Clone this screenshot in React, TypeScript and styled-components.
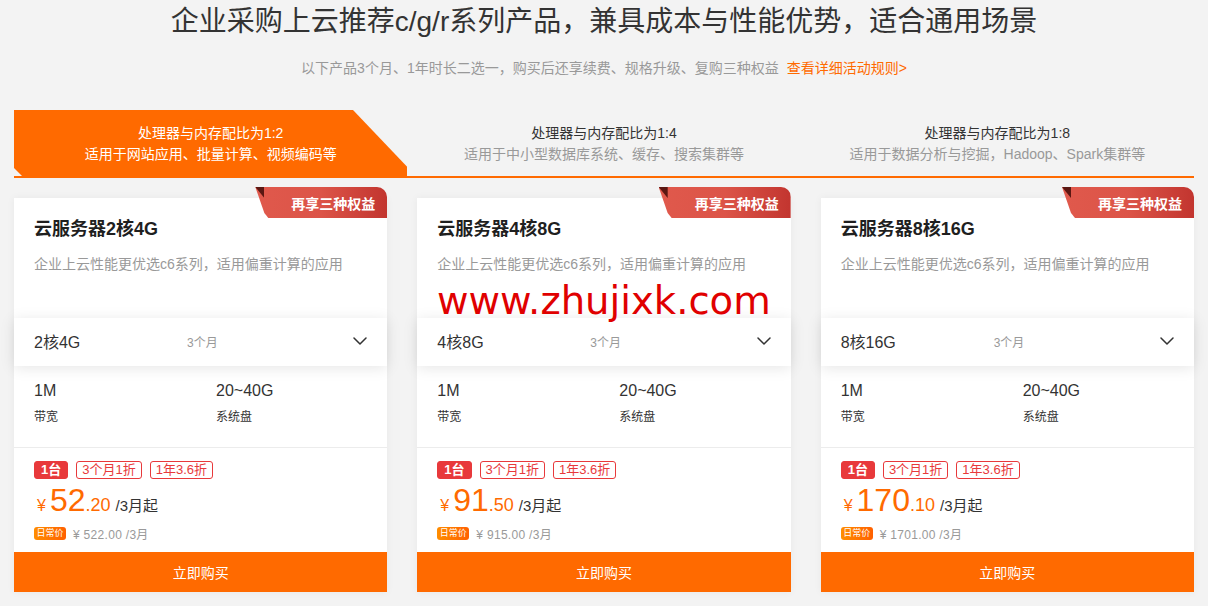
import React from 'react';
import styled, { createGlobalStyle } from 'styled-components';

const GlobalStyle = createGlobalStyle`
  * { box-sizing: border-box; }
  html, body { margin: 0; padding: 0; background: #f3f3f3; }
  body {
    font-family: "Liberation Sans", Arial, "Noto Sans CJK SC", sans-serif;
    color: #333;
  }
`;

const Page = styled.div`
  position: relative;
  width: 1180px;
  margin: 0 auto;
  padding-bottom: 14px;
`;

const Title = styled.h1`
  margin: 0;
  font-size: 28px;
  font-weight: 400;
  line-height: 44px;
  text-align: center;
  color: #333;
`;

const Subtitle = styled.p`
  margin: 14px 0 0;
  font-size: 14px;
  line-height: 20px;
  color: #999;
  text-align: center;
`;

const RuleLink = styled.a`
  margin-left: 8px;
  color: #ff6a00;
  text-decoration: none;
`;

const Tabs = styled.div`
  display: grid;
  grid-template-columns: repeat(3, 1fr);
  margin-top: 32px;
  border-bottom: 2px solid #ff6a00;
`;

const Tab = styled.div<{ $active?: boolean }>`
  height: 66px;
  display: flex;
  flex-direction: column;
  align-items: center;
  justify-content: center;
  padding-top: 2px;
  font-size: 14px;
  line-height: 21px;
  background: ${(p) => (p.$active ? '#ff6a00' : 'transparent')};
  clip-path: ${(p) =>
    p.$active
      ? 'polygon(0 0, 339px 0, 100% 57px, 100% 100%, 8px 100%, 0 58px)'
      : 'none'};
`;

const TabMain = styled.div<{ $active?: boolean }>`
  color: ${(p) => (p.$active ? '#fff' : '#333')};
`;

const TabSub = styled.div<{ $active?: boolean }>`
  color: ${(p) => (p.$active ? '#fff' : '#999')};
`;

const Cards = styled.div`
  display: grid;
  grid-template-columns: repeat(3, 1fr);
  gap: 30px;
  margin-top: 20px;
`;

const Card = styled.div`
  position: relative;
  height: 394px;
  display: flex;
  flex-direction: column;
  background: #fff;
  box-shadow: 0 0 8px rgba(0, 0, 0, 0.05);
`;

const Badge = styled.div`
  position: absolute;
  top: -11px;
  right: 0;
  width: 132px;
  height: 31px;
  display: flex;
  align-items: center;
  justify-content: flex-end;
  padding-right: 12px;
  font-size: 14px;
  font-weight: 700;
  color: #fff;
  background: linear-gradient(90deg, #e0594c 0%, #dc5448 50%, #c2352f 100%);
  border-top-right-radius: 10px;
  clip-path: polygon(0 0, 100% 0, 100% 100%, 13px 100%, 9px 26px);
  &::before {
    content: '';
    position: absolute;
    left: 0;
    top: 0;
    width: 9px;
    height: 11px;
    background: #5a1712;
    clip-path: polygon(0 0, 100% 100%, 100% 0);
  }
`;

const CardTitle = styled.div`
  margin: 18px 20px 0;
  font-size: 18px;
  font-weight: 700;
  line-height: 26px;
  color: #1f1f1f;
`;

const CardDesc = styled.div`
  margin: 12px 20px 0;
  font-size: 14px;
  line-height: 20px;
  color: #999;
`;

const SelectRow = styled.div`
  position: relative;
  margin-top: 44px;
  height: 48px;
  display: grid;
  grid-template-columns: 153px 1fr auto;
  align-items: center;
  padding: 0 20px 2px 20px;
  background: #fff;
  box-shadow: 0 2px 14px rgba(0, 0, 0, 0.1);
`;

const SelectValue = styled.span`
  font-size: 16px;
  color: #333;
`;

const SelectTerm = styled.span`
  font-size: 12px;
  color: #999;
`;

const Specs = styled.div`
  display: grid;
  grid-template-columns: 182px 1fr;
  height: 82px;
  padding: 13px 20px 0;
  border-bottom: 1px solid #ececec;
`;

const SpecValue = styled.div`
  font-size: 16px;
  line-height: 24px;
  color: #333;
`;

const SpecLabel = styled.div`
  margin-top: 5px;
  font-size: 12px;
  line-height: 18px;
  color: #333;
`;

const PriceBlock = styled.div`
  padding: 13px 20px 0;
`;

const Tags = styled.div`
  display: flex;
  gap: 8px;
`;

const Tag = styled.span<{ $solid?: boolean }>`
  height: 18px;
  line-height: 16px;
  padding: 0 ${(p) => (p.$solid ? 6 : 5)}px;
  font-size: 13px;
  font-weight: ${(p) => (p.$solid ? 700 : 400)};
  border: 1px solid #e8393b;
  border-radius: 3px;
  color: ${(p) => (p.$solid ? '#fff' : '#e8393b')};
  background: ${(p) => (p.$solid ? '#e8393b' : '#fff')};
`;

const PriceRow = styled.div`
  display: flex;
  align-items: baseline;
  margin-top: 2px;
  color: #ff6a00;
`;

const Yen = styled.span`
  font-size: 16px;
  margin-right: 4px;
  margin-left: 3px;
`;

const Big = styled.span`
  font-size: 32px;
  line-height: 38px;
`;

const Cents = styled.span`
  font-size: 18px;
`;

const Unit = styled.span`
  margin-left: 5px;
  font-size: 15px;
  color: #333;
`;

const NormalRow = styled.div`
  display: flex;
  align-items: center;
  height: 14px;
  margin-top: 7px;
`;

const NormalBadge = styled.span`
  width: 32px;
  height: 13px;
  line-height: 13px;
  border-radius: 3px;
  text-align: center;
  font-size: 9px;
  color: #fff;
  background: linear-gradient(90deg, #ff8d00, #ff6000);
`;

const NormalPrice = styled.span`
  margin-left: 7px;
  font-size: 12px;
  letter-spacing: 0.3px;
  color: #999;
`;

const BuyButton = styled.button`
  margin-top: auto;
  height: 40px;
  width: 100%;
  border: none;
  background: #ff6a00;
  color: #fff;
  font-family: inherit;
  font-size: 14px;
  cursor: pointer;
`;

const Watermark = styled.div`
  position: absolute;
  left: 423px;
  top: 282px;
  font-family: "DejaVu Sans", sans-serif;
  font-size: 38.6px;
  line-height: 38px;
  color: #e00000;
  pointer-events: none;
  white-space: nowrap;
`;

const Chevron = () => (
  <svg width="14" height="8" viewBox="0 0 14 8" fill="none">
    <polyline points="1,1 7,7 13,1" stroke="#333" strokeWidth="1.5" strokeLinecap="round" strokeLinejoin="round" />
  </svg>
);

const tabs = [
  { main: '处理器与内存配比为1:2', sub: '适用于网站应用、批量计算、视频编码等', active: true },
  { main: '处理器与内存配比为1:4', sub: '适用于中小型数据库系统、缓存、搜索集群等' },
  { main: '处理器与内存配比为1:8', sub: '适用于数据分析与挖掘，Hadoop、Spark集群等' },
];

const cards = [
  { name: '云服务器2核4G', spec: '2核4G', big: '52', cents: '.20', normal: '¥ 522.00 /3月' },
  { name: '云服务器4核8G', spec: '4核8G', big: '91', cents: '.50', normal: '¥ 915.00 /3月' },
  { name: '云服务器8核16G', spec: '8核16G', big: '170', cents: '.10', normal: '¥ 1701.00 /3月' },
];

export default function App() {
  return (
    <>
      <GlobalStyle />
      <Page>
        <Title>企业采购上云推荐c/g/r系列产品，兼具成本与性能优势，适合通用场景</Title>
        <Subtitle>
          以下产品3个月、1年时长二选一，购买后还享续费、规格升级、复购三种权益
          <RuleLink href="#">查看详细活动规则&gt;</RuleLink>
        </Subtitle>
        <Tabs>
          {tabs.map((t) => (
            <Tab key={t.main} $active={t.active}>
              <TabMain $active={t.active}>{t.main}</TabMain>
              <TabSub $active={t.active}>{t.sub}</TabSub>
            </Tab>
          ))}
        </Tabs>
        <Cards>
          {cards.map((c) => (
            <Card key={c.name}>
              <Badge>再享三种权益</Badge>
              <CardTitle>{c.name}</CardTitle>
              <CardDesc>企业上云性能更优选c6系列，适用偏重计算的应用</CardDesc>
              <SelectRow>
                <SelectValue>{c.spec}</SelectValue>
                <SelectTerm>3个月</SelectTerm>
                <Chevron />
              </SelectRow>
              <Specs>
                <div>
                  <SpecValue>1M</SpecValue>
                  <SpecLabel>带宽</SpecLabel>
                </div>
                <div>
                  <SpecValue>20~40G</SpecValue>
                  <SpecLabel>系统盘</SpecLabel>
                </div>
              </Specs>
              <PriceBlock>
                <Tags>
                  <Tag $solid>1台</Tag>
                  <Tag>3个月1折</Tag>
                  <Tag>1年3.6折</Tag>
                </Tags>
                <PriceRow>
                  <Yen>¥</Yen>
                  <Big>{c.big}</Big>
                  <Cents>{c.cents}</Cents>
                  <Unit>/3月起</Unit>
                </PriceRow>
                <NormalRow>
                  <NormalBadge>日常价</NormalBadge>
                  <NormalPrice>{c.normal}</NormalPrice>
                </NormalRow>
              </PriceBlock>
              <BuyButton>立即购买</BuyButton>
            </Card>
          ))}
        </Cards>
        <Watermark>www.zhujixk.com</Watermark>
      </Page>
    </>
  );
}
